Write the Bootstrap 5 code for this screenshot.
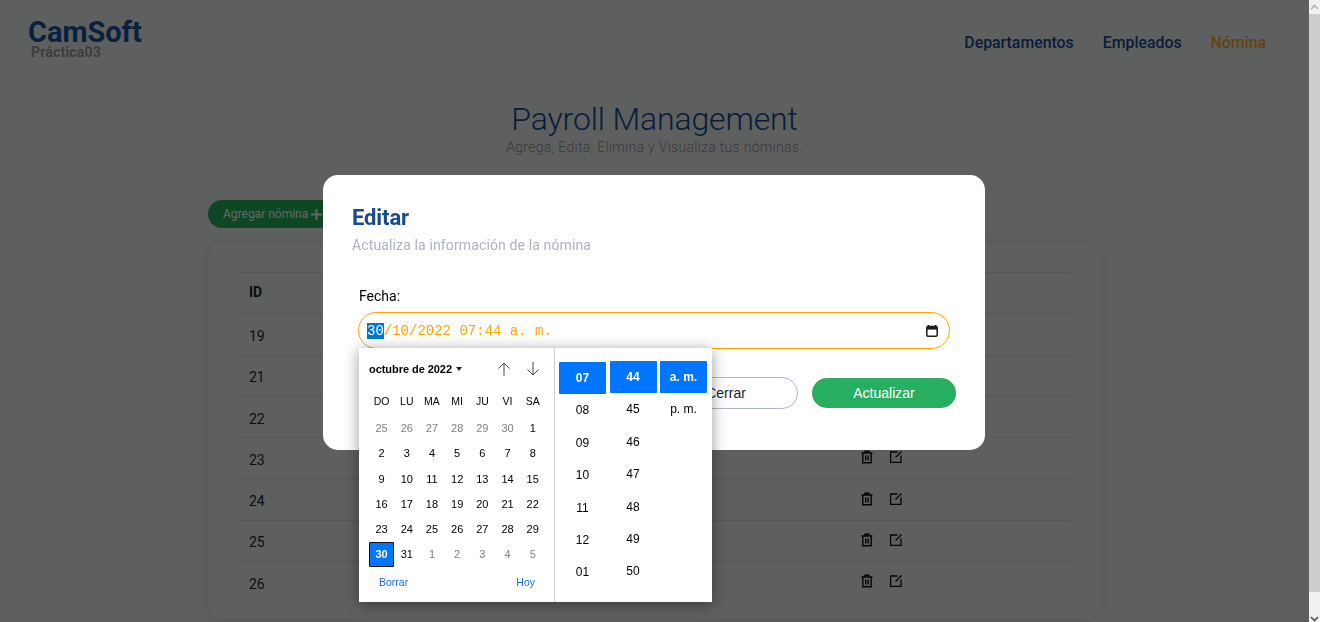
<!DOCTYPE html>
<html lang="es">
<head>
<meta charset="utf-8">
<title>Payroll Management</title>
<link href="https://cdn.jsdelivr.net/npm/bootstrap@5.3.0/dist/css/bootstrap.min.css" rel="stylesheet">
<style>
html,body{height:622px;overflow:hidden;}
body{font-family:Roboto,"Liberation Sans",sans-serif;background:#ecf0f1;color:#000;}
.shell{height:622px;}
.pagearea{width:1309px;height:622px;overflow:hidden;}
.sbar{width:11px;height:622px;background:#f1f1f1;}
.sbar-btn{height:14px;}
.sbar-thumb{height:578px;background:#cdcdcd;}
.sbar-end{height:30px;}
.topbar{height:88px;padding:19px 43px 0 28px;}
.brand-main{font-size:29px;font-weight:700;line-height:26px;color:#1b5098;letter-spacing:-.05px;}
.brand-sub{font-size:14px;font-weight:700;line-height:14px;color:#9a9a9a;margin-left:3px;letter-spacing:.2px;}
.mainnav{gap:29px;padding-top:14px;}
.mainnav .nav-link{padding:0;font-size:15.85px;font-weight:500;line-height:20px;color:#174a8e;}
.mainnav .nav-link.active{color:#f5a623;}
.herotitle{font-size:32px;font-weight:300;line-height:40px;color:#174a8e;margin:11px 0 0;letter-spacing:-.15px;}
.herosub{font-size:14px;font-weight:300;line-height:16px;color:#8d8f96;margin:0;letter-spacing:.3px;}
.pagebody{width:892px;margin-left:208px;padding-top:45px;}
.addbtn{height:28px;width:160px;font-size:12px;font-weight:400;line-height:28px;padding:0 15px;background:#27ae60;color:#fff;border:0;border-radius:14px;text-align:left;}
.tablecard{margin-top:16px;height:375px;border-radius:15px;padding:28px 29px 0 32px;background:#ecf0f1;box-shadow:0 0 14px rgba(0,0,0,.12);border:0;}
.paytable{margin:0;table-layout:fixed;--bs-table-bg:transparent;--bs-table-border-color:#d7dbdc;}
.paytable th,.paytable td{height:41.3px;padding:4px 9px 0;vertical-align:middle;font-size:14px;font-weight:400;}
.paytable th{font-weight:700;border-top:1px solid #d7dbdc;padding:0 9px 2px;}
.paytable tr:last-child td{border-bottom:0;}
.c-id{width:611px;}
.acts{gap:15px;margin-bottom:6px;}
.modal-backdrop.show{opacity:.6;width:1309px;height:622px;}
.modal.editmodal{width:1309px;height:622px;overflow:visible;}
.editmodal .modal-dialog{max-width:662px;margin:175px 0 0 323px;}
.editmodal .modal-content{height:275px;border:0;border-radius:15px;padding:29px 29px;display:block;}
.edit-title{font-size:22px;font-weight:700;line-height:28px;color:#174a8e;margin:0;letter-spacing:-.1px;}
.edit-sub{font-size:14px;font-weight:400;line-height:18px;color:#adb2c2;margin:4px 0 0;letter-spacing:.13px;}
.fieldblock{margin:33px 6px 0 6px;position:relative;}
.fieldlabel{font-size:14px;line-height:18px;margin:0 0 7px 1px;display:block;}
.dateinput{height:37px;border:1px solid #ffa500;border-radius:19px;padding:1px 11px 0 8px;font-family:"Liberation Mono",monospace;font-size:14px;color:#ffa500;white-space:pre;}
.dateinput mark{padding:0;background:#0078d7;color:#fff;}
.modalactions{gap:14px;margin:29px -6px 0 0;}
.mbtn{font-family:"Liberation Sans",sans-serif;font-size:14px;border-radius:16px;width:144px;text-align:center;padding:0;}
.mbtn-close-x{height:32px;line-height:30px;background:#fff;border:1px solid #b0b7cb;color:#1a1a2e;margin-top:-1px;}
.mbtn-save{height:30px;line-height:30px;background:#27ae60;color:#fff;border:0;}
.pickerpop{position:absolute;left:1px;top:61px;width:353px;height:254px;background:#fff;box-shadow:0 2px 14px rgba(0,0,0,.4);font-family:"Liberation Sans",sans-serif;font-size:11px;z-index:5;}
.calside{width:196px;border-right:1px solid #d0d0d0;padding:10px 11px 0 10px;}
.calhead{height:22px;font-weight:700;font-size:11px;}
.calhead>span:first-child{letter-spacing:-.05px;}
.caret-d{display:inline-block;border:3.5px solid transparent;border-top:4px solid #222;border-bottom:0;margin-left:4px;vertical-align:2px;}
.arrs{gap:13px;padding-right:2px;}
.calgrid{display:grid;grid-template-columns:repeat(7,25.2px);grid-template-rows:27.2px;grid-auto-rows:25.2px;margin-top:9px;text-align:center;line-height:25.2px;}
.calgrid .dh{font-size:10.5px;}
.calgrid .dim{color:#808080;}
.calgrid .sel{background:#0075ff;color:#fff;font-weight:700;outline:1.5px solid #111;outline-offset:-1.5px;border-radius:1px;}
.calfoot{margin-top:2px;padding:0 0 0 10px;color:#1a6ed8;font-size:10.5px;height:26px;line-height:26px;}
.timeside{gap:3.5px;padding:13px 5px 0 4px;}
.tcol{width:47px;text-align:center;font-size:12px;}
.tcol div{height:32.4px;line-height:32.4px;}
.tcol .on{background:#0075ff;color:#fff;font-weight:700;border-radius:1px;}
.tcol-h{padding-top:1px;}
</style>
</head>
<body>
<div class="shell d-flex">
  <div class="pagearea">
    <div class="topbar d-flex justify-content-between align-items-start">
      <div>
        <div class="brand-main">CamSoft</div>
        <div class="brand-sub">Práctica03</div>
      </div>
      <ul class="nav mainnav">
        <li class="nav-item"><a class="nav-link" href="#">Departamentos</a></li>
        <li class="nav-item"><a class="nav-link" href="#">Empleados</a></li>
        <li class="nav-item"><a class="nav-link active" href="#">Nómina</a></li>
      </ul>
    </div>
    <div class="text-center">
      <h1 class="herotitle">Payroll Management</h1>
      <p class="herosub">Agrega, Edita, Elimina y Visualiza tus nóminas.</p>
    </div>
    <div class="pagebody">
      <button class="btn addbtn" type="button">Agregar nómina <svg width="11" height="11" viewBox="0 0 11 11"><path d="M5.5 0v11M0 5.5h11" stroke="#fff" stroke-width="2"/></svg></button>
      <div class="card tablecard">
        <table class="table paytable">
          <colgroup><col class="c-id"><col></colgroup>
          <thead><tr><th>ID</th><th></th></tr></thead>
          <tbody id="rows"></tbody>
        </table>
      </div>
    </div>
  </div>
  <div class="sbar">
    <div class="sbar-btn d-flex justify-content-center align-items-center"><svg width="9" height="6" viewBox="0 0 9 6"><path d="M1 5l3.5-3.5L8 5" fill="none" stroke="#b4b4b4" stroke-width="1.6"/></svg></div>
    <div class="sbar-thumb"></div>
    <div class="sbar-end d-flex justify-content-center align-items-end"><svg width="9" height="6" viewBox="0 0 9 6"><path d="M1 1l3.5 3.5L8 1" fill="none" stroke="#505050" stroke-width="1.6"/></svg></div>
  </div>
</div>

<div class="modal-backdrop show"></div>
<div class="modal editmodal d-block" tabindex="-1">
  <div class="modal-dialog">
    <div class="modal-content">
      <h5 class="edit-title">Editar</h5>
      <p class="edit-sub">Actualiza la información de la nómina</p>
      <div class="fieldblock">
        <label class="fieldlabel">Fecha:</label>
        <div class="dateinput d-flex justify-content-between align-items-center">
          <span><mark>30</mark>/10/2022 07:44 a. m.</span>
          <svg width="12" height="12" viewBox="0 0 12 12"><path d="M2.5 0v2M9.5 0v2" stroke="#1c1c1c" stroke-width="1.6"/><rect x=".8" y="1.6" width="10.4" height="9.6" rx="1.2" fill="none" stroke="#1c1c1c" stroke-width="1.5"/><path d="M1 2h10v2.6H1z" fill="#1c1c1c"/></svg>
        </div>
        <div class="pickerpop d-flex">
          <div class="calside">
            <div class="calhead d-flex justify-content-between align-items-center">
              <span>octubre de 2022<i class="caret-d"></i></span>
              <span class="arrs d-flex">
                <svg width="16" height="16" viewBox="0 0 16 16"><path d="M8 15V2M2.5 7.5L8 2l5.5 5.5" fill="none" stroke="#444" stroke-width="1"/></svg>
                <svg width="16" height="16" viewBox="0 0 16 16"><path d="M8 1v13M2.5 8.5L8 14l5.5-5.5" fill="none" stroke="#444" stroke-width="1"/></svg>
              </span>
            </div>
            <div class="calgrid" id="cal"></div>
            <div class="calfoot d-flex justify-content-between"><span>Borrar</span><span class="me-2">Hoy</span></div>
          </div>
          <div class="timeside d-flex">
            <div class="tcol tcol-h"><div class="on">07</div><div>08</div><div>09</div><div>10</div><div>11</div><div>12</div><div>01</div></div>
            <div class="tcol"><div class="on">44</div><div>45</div><div>46</div><div>47</div><div>48</div><div>49</div><div>50</div></div>
            <div class="tcol"><div class="on">a. m.</div><div>p. m.</div></div>
          </div>
        </div>
        <div class="modalactions d-flex justify-content-end">
          <button class="btn mbtn mbtn-close-x" type="button">Cerrar</button>
          <button class="btn mbtn mbtn-save" type="button">Actualizar</button>
        </div>
      </div>
    </div>
  </div>
</div>
<script>
var trash='<svg width="14" height="14" viewBox="0 0 14 14"><path d="M1.5 3h11M5 3V1.2h4V3M2.8 3v9.8h8.4V3M5.8 5.5v5M8.2 5.5v5" fill="none" stroke="#0a0a0a" stroke-width="1.4"/></svg>';
var edit='<svg width="14" height="14" viewBox="0 0 14 14"><path d="M8.5 2H1.6v10.4H12V5.5M6.5 7.5L12.5 1.5" fill="none" stroke="#0a0a0a" stroke-width="1.3"/></svg>';
document.getElementById('rows').innerHTML=[19,21,22,23,24,25,26].map(function(n){return '<tr><td>'+n+'</td><td><div class="acts d-flex">'+trash+edit+'</div></td></tr>';}).join('');
var h=['DO','LU','MA','MI','JU','VI','SA'].map(function(d){return '<div class="dh">'+d+'</div>';}).join('');
var c='';
[25,26,27,28,29,30].forEach(function(d){c+='<div class="dim">'+d+'</div>';});
for(var i=1;i<=31;i++){c+='<div'+(i==30?' class="sel"':'')+'>'+i+'</div>';}
[1,2,3,4,5].forEach(function(d){c+='<div class="dim">'+d+'</div>';});
document.getElementById('cal').innerHTML=h+c;
</script>
<script src="https://cdn.jsdelivr.net/npm/bootstrap@5.3.0/dist/js/bootstrap.bundle.min.js"></script>
</body>
</html>
